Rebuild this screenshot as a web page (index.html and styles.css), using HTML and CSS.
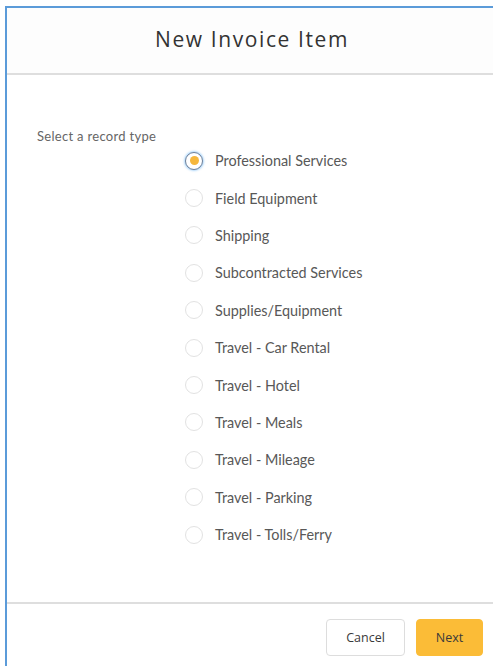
FILE: index.html
```html
<!DOCTYPE html>
<html lang="en">
<head>
<meta charset="utf-8">
<title>New Invoice Item</title>
<link rel="stylesheet" href="styles.css">
</head>
<body>
<div class="frame">
  <header class="modal-header">
    <h2 class="modal-title">New Invoice Item</h2>
  </header>
  <main class="modal-body">
    <div class="field-label">Select a record type</div>
    <ul class="radio-list">
      <li class="radio-row"><span class="radio checked"></span><span class="radio-text">Professional Services</span></li>
      <li class="radio-row"><span class="radio"></span><span class="radio-text">Field Equipment</span></li>
      <li class="radio-row"><span class="radio"></span><span class="radio-text">Shipping</span></li>
      <li class="radio-row"><span class="radio"></span><span class="radio-text">Subcontracted Services</span></li>
      <li class="radio-row"><span class="radio"></span><span class="radio-text">Supplies/Equipment</span></li>
      <li class="radio-row"><span class="radio"></span><span class="radio-text">Travel - Car Rental</span></li>
      <li class="radio-row"><span class="radio"></span><span class="radio-text">Travel - Hotel</span></li>
      <li class="radio-row"><span class="radio"></span><span class="radio-text">Travel - Meals</span></li>
      <li class="radio-row"><span class="radio"></span><span class="radio-text">Travel - Mileage</span></li>
      <li class="radio-row"><span class="radio"></span><span class="radio-text">Travel - Parking</span></li>
      <li class="radio-row"><span class="radio"></span><span class="radio-text">Travel - Tolls/Ferry</span></li>
    </ul>
  </main>
  <footer class="modal-footer">
    <button class="btn btn-neutral">Cancel</button>
    <button class="btn btn-brand">Next</button>
  </footer>
</div>
</body>
</html>
```

FILE: styles.css
```css
html, body {
  margin: 0;
  padding: 0;
  background: #ffffff;
  height: 100%;
}

body {
  overflow: hidden;
}

.frame {
  margin: 6px 0 0 5px;
  border-left: 2px solid #5b9bd9;
  border-top: 2px solid #5b9bd9;
  display: flex;
  flex-direction: column;
  height: calc(100% - 8px);
  background: #ffffff;
}

.modal-header {
  height: 65px;
  flex: none;
  display: flex;
  align-items: center;
  justify-content: center;
  border-bottom: 2px solid #dedede;
  background: #fdfdfd;
}

.modal-title {
  margin: 0 0 4px 0;
  font-family: "Open Sans", "Noto Sans", sans-serif;
  font-weight: 400;
  font-size: 21px;
  letter-spacing: 1.6px;
  color: #333333;
  padding-left: 4px;
}

.modal-body {
  height: 527px;
  flex: none;
  padding: 53px 0 0 30px;
  box-sizing: border-box;
}

.field-label {
  font-family: "Lato", "Liberation Sans", sans-serif;
  font-size: 13px;
  letter-spacing: 0.3px;
  color: #666666;
  line-height: 16px;
}

.radio-list {
  list-style: none;
  margin: -2px 0 0 148px;
  padding: 0;
}

.radio-row {
  height: 37.4px;
  display: flex;
  align-items: center;
  gap: 12px;
}

.radio {
  width: 18px;
  height: 18px;
  box-sizing: border-box;
  border-radius: 50%;
  border: 1px solid #e2e2e2;
  background: #ffffff;
  flex: none;
  display: flex;
  align-items: center;
  justify-content: center;
}

.radio.checked {
  border: 1.5px solid #6d7f99;
  box-shadow: 0 0 2px 1px rgba(21, 137, 238, 0.35);
}

.radio.checked::after {
  content: "";
  width: 9px;
  height: 9px;
  border-radius: 50%;
  background: #f6b73c;
}

.radio-text {
  font-family: "Lato", "Liberation Sans", sans-serif;
  font-size: 14.4px;
  color: #585858;
}

.modal-footer {
  flex: none;
  border-top: 2px solid #dedede;
  display: flex;
  justify-content: flex-end;
  gap: 11px;
  padding: 15px 10px 0 0;
}

.btn {
  height: 37px;
  box-sizing: border-box;
  border-radius: 4px;
  font-family: "Open Sans", "Noto Sans", sans-serif;
  font-size: 12.5px;
  color: #3a3a3a;
  padding: 0;
  cursor: pointer;
}

.btn-neutral {
  width: 79px;
  background: #ffffff;
  border: 1px solid #dddddd;
}

.btn-brand {
  width: 67px;
  background: #fbbc37;
  border: 1px solid #fbbc37;
}
```
